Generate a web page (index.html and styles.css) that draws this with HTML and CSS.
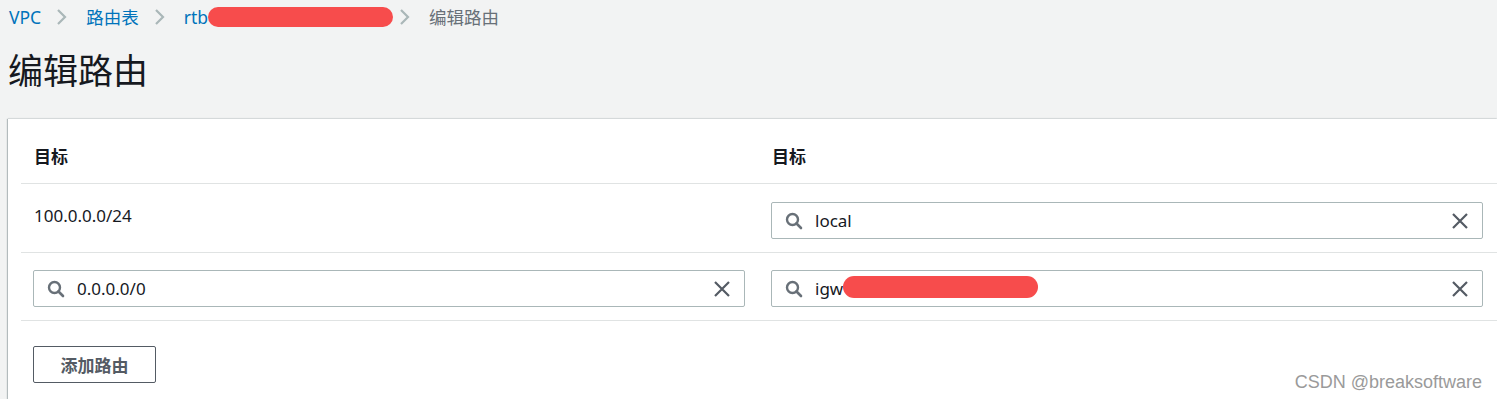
FILE: index.html
```html
<!DOCTYPE html>
<html lang="zh-CN">
<head>
    <meta charset="UTF-8">
    <meta name="viewport" content="width=device-width, initial-scale=1.0">
    <title>编辑路由</title>
    <link rel="stylesheet" href="styles.css">
</head>
<body>
    <!-- 面包屑 -->
    <nav class="breadcrumb">
        <a href="#">VPC</a>
        <svg class="sep" width="12" height="18" viewBox="0 0 12 18"><polyline points="2,2 9,9 2,16" fill="none" stroke="#aab7b8" stroke-width="2.2"/></svg>
        <a href="#">路由表</a>
        <svg class="sep" width="12" height="18" viewBox="0 0 12 18"><polyline points="2,2 9,9 2,16" fill="none" stroke="#aab7b8" stroke-width="2.2"/></svg>
        <a href="#" class="rtb">rtb<span class="mask mask-crumb"></span></a>
        <svg class="sep" width="12" height="18" viewBox="0 0 12 18"><polyline points="2,2 9,9 2,16" fill="none" stroke="#aab7b8" stroke-width="2.2"/></svg>
        <span class="current">编辑路由</span>
    </nav>

    <h1 class="title">编辑路由</h1>

    <div class="card">
        <div class="row head">
            <div class="cell">目标</div>
            <div class="cell">目标</div>
        </div>

        <div class="row">
            <div class="cell text">100.0.0.0/24</div>
            <div class="cell">
                <div class="search">
                    <svg class="icon-search" width="18" height="18" viewBox="0 0 18 18"><circle cx="7.5" cy="7.5" r="5.5" fill="none" stroke="#687078" stroke-width="2.4"/><line x1="11.5" y1="11.5" x2="16" y2="16" stroke="#687078" stroke-width="2.6" stroke-linecap="round"/></svg>
                    <span class="value">local</span>
                    <svg class="icon-clear" width="18" height="18" viewBox="0 0 18 18"><path d="M2 2 L16 16 M16 2 L2 16" stroke="#545b64" stroke-width="2.2"/></svg>
                </div>
            </div>
        </div>

        <div class="row">
            <div class="cell">
                <div class="search">
                    <svg class="icon-search" width="18" height="18" viewBox="0 0 18 18"><circle cx="7.5" cy="7.5" r="5.5" fill="none" stroke="#687078" stroke-width="2.4"/><line x1="11.5" y1="11.5" x2="16" y2="16" stroke="#687078" stroke-width="2.6" stroke-linecap="round"/></svg>
                    <span class="value">0.0.0.0/0</span>
                    <svg class="icon-clear" width="18" height="18" viewBox="0 0 18 18"><path d="M2 2 L16 16 M16 2 L2 16" stroke="#545b64" stroke-width="2.2"/></svg>
                </div>
            </div>
            <div class="cell">
                <div class="search">
                    <svg class="icon-search" width="18" height="18" viewBox="0 0 18 18"><circle cx="7.5" cy="7.5" r="5.5" fill="none" stroke="#687078" stroke-width="2.4"/><line x1="11.5" y1="11.5" x2="16" y2="16" stroke="#687078" stroke-width="2.6" stroke-linecap="round"/></svg>
                    <span class="value">igw<span class="mask mask-igw"></span></span>
                    <svg class="icon-clear" width="18" height="18" viewBox="0 0 18 18"><path d="M2 2 L16 16 M16 2 L2 16" stroke="#545b64" stroke-width="2.2"/></svg>
                </div>
            </div>
        </div>

        <div class="actions">
            <button class="add-btn">添加路由</button>
        </div>
    </div>

    <div class="watermark">CSDN @breaksoftware</div>
</body>
</html>
```

FILE: styles.css
```css
body {
    margin: 0;
    background-color: #f2f3f3;
    font-family: "Noto Sans", "Noto Sans CJK SC", sans-serif;
    font-size: 17px;
    color: #16191f;
    height: 399px;
    overflow: hidden;
    position: relative;
}
.breadcrumb {
    display: flex;
    align-items: center;
    height: 33px;
    padding-left: 9px;
    font-size: 17.5px;
}
.breadcrumb a {
    color: #0073bb;
    text-decoration: none;
    display: flex;
    align-items: center;
}
.breadcrumb .sep {
    margin: 0 18px 0 15px;
}
.breadcrumb .current {
    color: #687078;
}
.mask {
    display: inline-block;
    background-color: #f74c4c;
    border-radius: 11px;
}
.mask-crumb {
    width: 185px;
    height: 20px;
    margin-right: -9px;
}
.mask-igw {
    width: 195px;
    height: 22px;
    vertical-align: middle;
    margin-top: -3px;
}
.title {
    margin: 16px 0 0 8px;
    height: 70px;
    font-size: 35px;
    font-weight: normal;
    line-height: 44px;
    color: #16191f;
}
.card {
    margin-left: 8px;
    background-color: white;
    padding-left: 13px;
    box-shadow: -1px 0 1px 0 rgba(0, 28, 36, 0.25), 0 -1px 1px 0 rgba(0, 28, 36, 0.08);
    height: 280px;
}
.row {
    display: grid;
    grid-template-columns: 1fr 1fr;
    column-gap: 26px;
    padding: 18px 14px 13px 12px;
    border-bottom: 1px solid #e0e3e3;
}
.row.head {
    padding-top: 26px;
    padding-bottom: 14px;
    font-weight: bold;
}
.row.head .cell {
    line-height: 24px;
    padding-left: 1px;
}
.cell.text {
    line-height: 24px;
    padding: 2px 0 0 1px;
}
.row + .row + .row {
    padding-top: 17px;
}
.search {
    display: flex;
    align-items: center;
    height: 35px;
    border: 1px solid #aab7b8;
    border-radius: 2px;
    padding: 0 13px 0 13px;
}
.icon-search {
    margin-right: 12px;
}
.value {
    flex: 1;
    display: flex;
    align-items: center;
}
.actions {
    padding: 25px 0 0 12px;
}
.add-btn {
    width: 123px;
    height: 37px;
    border: 1px solid #545b64;
    border-radius: 2px;
    background-color: white;
    color: #545b64;
    font-family: "Noto Sans", "Noto Sans CJK SC", sans-serif;
    font-size: 17px;
    font-weight: bold;
    cursor: pointer;
}
.watermark {
    position: absolute;
    right: 15px;
    bottom: 6px;
    font-family: "Liberation Sans", sans-serif;
    font-size: 18px;
    color: #9a9a9a;
}
```
